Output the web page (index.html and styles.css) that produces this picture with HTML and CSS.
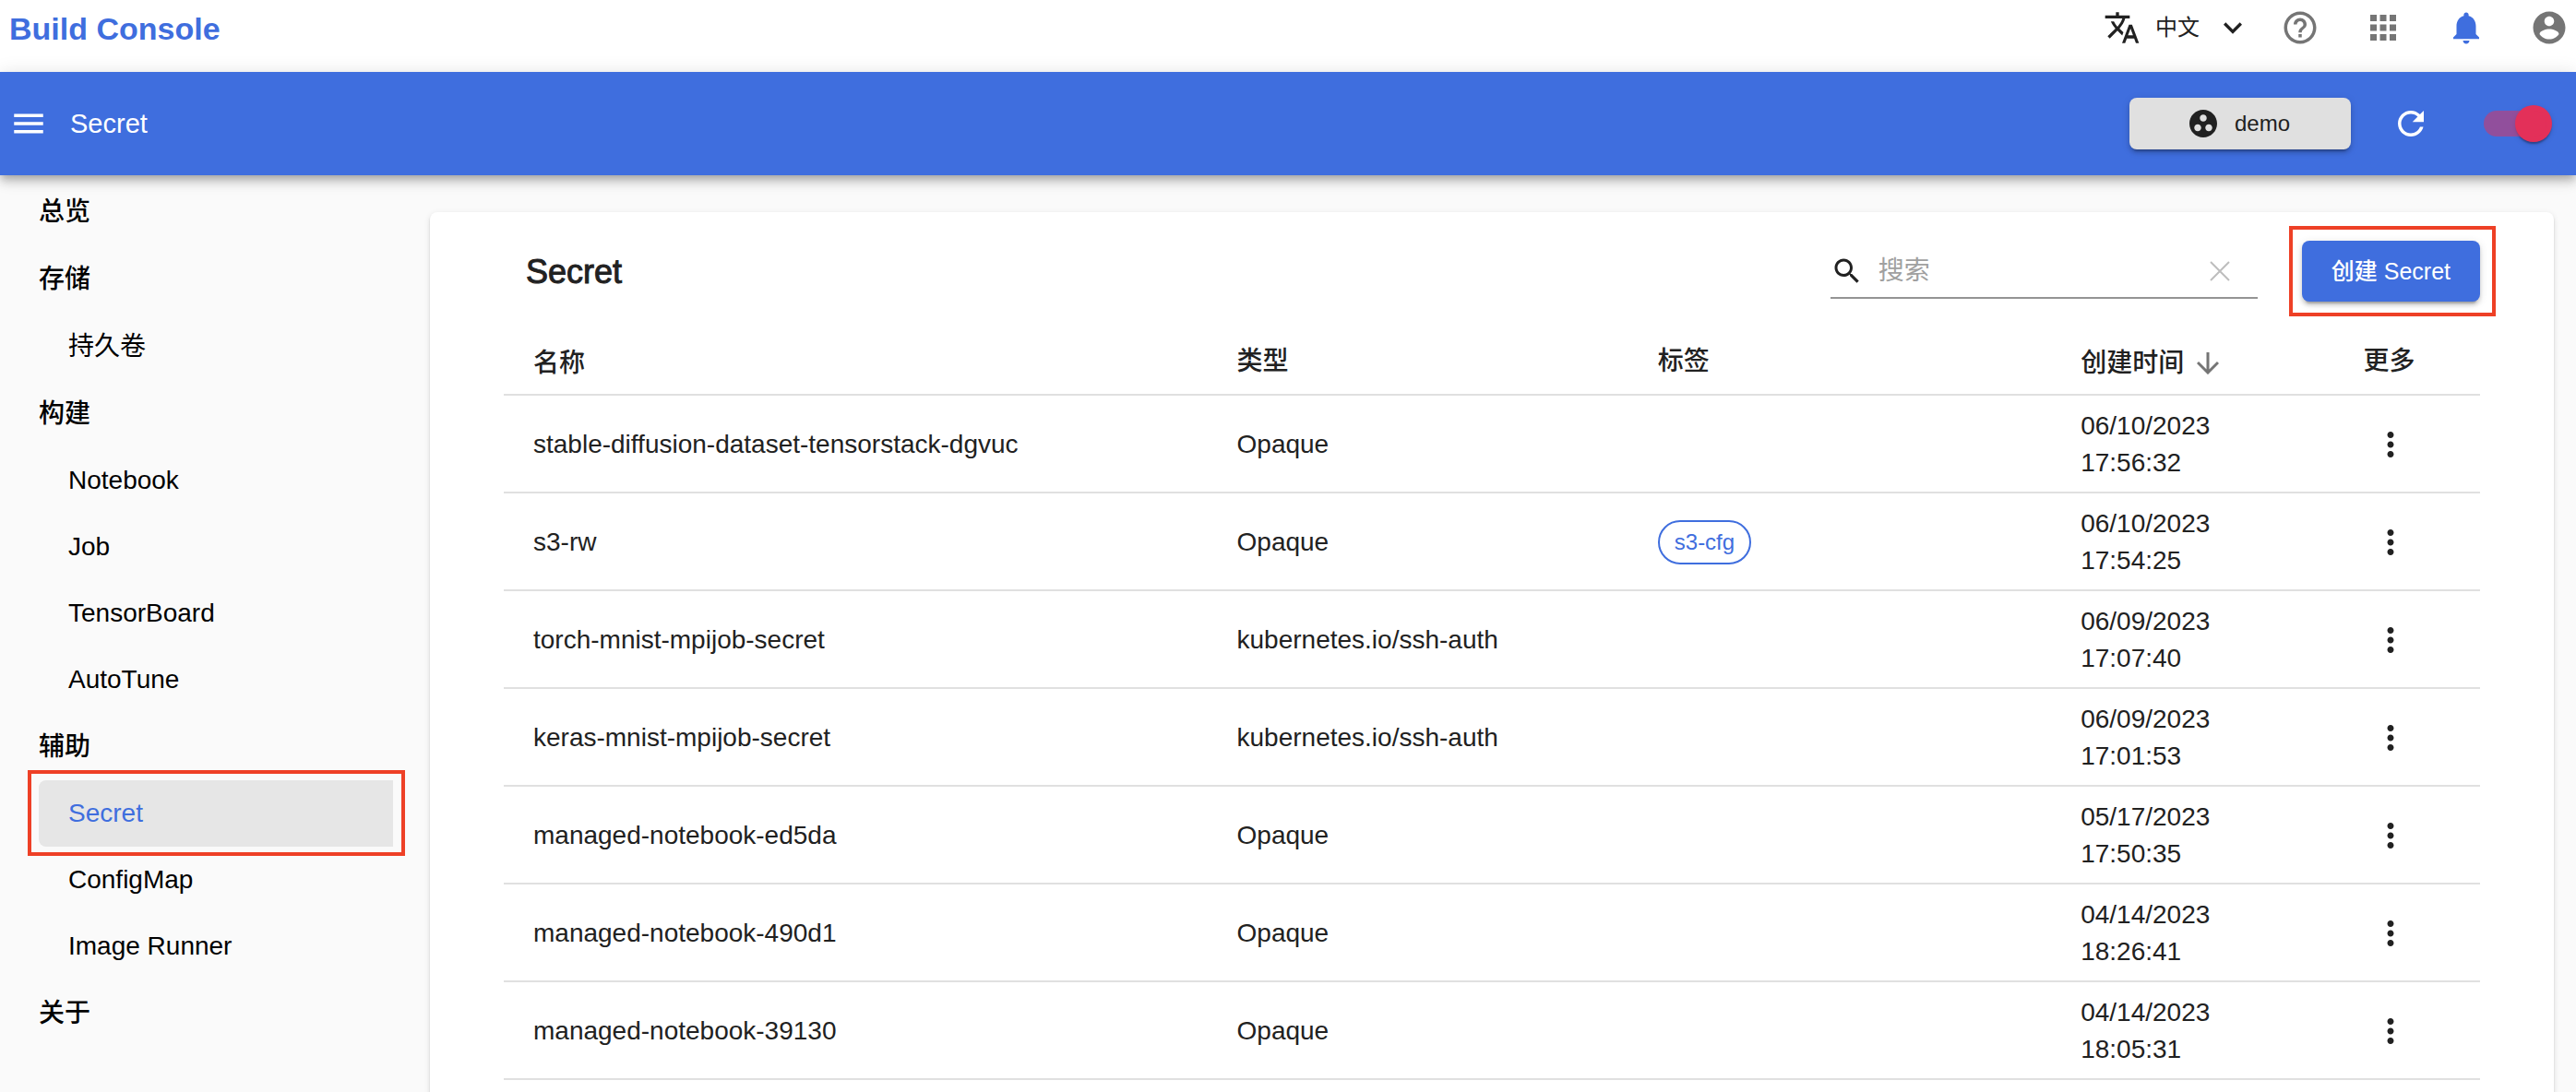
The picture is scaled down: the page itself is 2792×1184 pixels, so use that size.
FILE: index.html
```html
<!DOCTYPE html>
<html lang="zh-CN">
<head>
<meta charset="utf-8">
<meta name="viewport" content="width=device-width, initial-scale=1">
<title>Build Console</title>
<link rel="stylesheet" href="styles.css">
</head>
<body>
<svg class="sprite" aria-hidden="true">
  <symbol id="more" viewBox="0 0 24 24"><path d="M12 8c1.1 0 2-.9 2-2s-.9-2-2-2-2 .9-2 2 .9 2 2 2zm0 2c-1.1 0-2 .9-2 2s.9 2 2 2 2-.9 2-2-.9-2-2-2zm0 6c-1.1 0-2 .9-2 2s.9 2 2 2 2-.9 2-2-.9-2-2-2z"/></symbol>
</svg>
<header class="topbar">
  <a class="brand" href="#">Build Console</a>
  <div class="topbar-actions">
    <button class="language" type="button">
      <svg class="icon icon-lang" viewBox="0 0 24 24"><path d="M12.87 15.07l-2.54-2.51.03-.03c1.74-1.94 2.98-4.17 3.71-6.53H17V4h-7V2H8v2H1v1.99h11.17C11.5 7.92 10.44 9.75 9 11.35 8.07 10.32 7.3 9.19 6.69 8h-2c.73 1.63 1.73 3.17 2.98 4.56l-5.09 5.02L4 19l5-5 3.11 3.11.76-2.04zM18.5 10h-2L12 22h2l1.12-3h4.75L21 22h2l-4.5-12zm-2.62 7l1.62-4.33L19.12 17h-3.24z"/></svg>
      <span>中文</span>
      <svg class="icon icon-lang" viewBox="0 0 24 24"><path d="M16.59 8.59L12 13.17 7.41 8.59 6 10l6 6 6-6z"/></svg>
    </button>
    <div class="shortcuts">
      <button class="icon-button" type="button" aria-label="帮助"><svg class="icon" viewBox="0 0 24 24"><path d="M11 18h2v-2h-2v2zm1-16C6.48 2 2 6.48 2 12s4.48 10 10 10 10-4.48 10-10S17.52 2 12 2zm0 18c-4.41 0-8-3.59-8-8s3.59-8 8-8 8 3.59 8 8-3.59 8-8 8zm0-14c-2.21 0-4 1.79-4 4h2c0-1.1.9-2 2-2s2 .9 2 2c0 2-3 1.75-3 5h2c0-2.25 3-2.5 3-5 0-2.21-1.79-4-4-4z"/></svg></button>
      <button class="icon-button" type="button" aria-label="应用"><svg class="icon" viewBox="0 0 24 24"><path d="M4 8h4V4H4v4zm6 12h4v-4h-4v4zm-6 0h4v-4H4v4zm0-6h4v-4H4v4zm6 0h4v-4h-4v4zm6-10v4h4V4h-4zm-6 4h4V4h-4v4zm6 6h4v-4h-4v4zm0 6h4v-4h-4v4z"/></svg></button>
      <button class="icon-button icon-button-primary" type="button" aria-label="通知"><svg class="icon" viewBox="0 0 24 24"><path d="M12 22c1.1 0 2-.9 2-2h-4c0 1.1.89 2 2 2zm6-6v-5c0-3.07-1.64-5.64-4.5-6.32V4c0-.83-.67-1.5-1.5-1.5s-1.5.67-1.5 1.5v.68C7.63 5.36 6 7.92 6 11v5l-2 2v1h16v-1l-2-2z"/></svg></button>
      <button class="icon-button" type="button" aria-label="账户"><svg class="icon" viewBox="0 0 24 24"><path d="M12 2C6.48 2 2 6.48 2 12s4.48 10 10 10 10-4.48 10-10S17.52 2 12 2zm0 3c1.66 0 3 1.34 3 3s-1.34 3-3 3-3-1.34-3-3 1.34-3 3-3zm0 14.2c-2.5 0-4.71-1.28-6-3.22.03-1.99 4-3.08 6-3.08 1.99 0 5.97 1.09 6 3.08-1.29 1.94-3.5 3.22-6 3.22z"/></svg></button>
    </div>
  </div>
</header>

<div class="appbar">
  <button class="icon-button icon-button-light" type="button" aria-label="菜单"><svg class="icon" viewBox="0 0 24 24"><path d="M3 18h18v-2H3v2zm0-5h18v-2H3v2zm0-7v2h18V6H3z"/></svg></button>
  <h1 class="appbar-title">Secret</h1>
  <div class="appbar-actions">
    <button class="project" type="button">
      <svg class="icon icon-project" viewBox="0 0 24 24"><path d="M12 2C6.48 2 2 6.48 2 12s4.48 10 10 10 10-4.48 10-10S17.52 2 12 2zM8 17.5c-1.38 0-2.5-1.12-2.5-2.5s1.12-2.5 2.5-2.5 2.5 1.12 2.5 2.5-1.12 2.5-2.5 2.5zM9.5 8c0-1.38 1.12-2.5 2.5-2.5s2.5 1.12 2.5 2.5-1.12 2.5-2.5 2.5S9.5 9.38 9.5 8zm6.5 9.5c-1.38 0-2.5-1.12-2.5-2.5s1.12-2.5 2.5-2.5 2.5 1.12 2.5 2.5-1.12 2.5-2.5 2.5z"/></svg>
      <span>demo</span>
    </button>
    <button class="icon-button icon-button-light refresh" type="button" aria-label="刷新"><svg class="icon" viewBox="0 0 24 24"><path d="M17.65 6.35C16.2 4.9 14.21 4 12 4c-4.42 0-7.99 3.58-7.99 8s3.57 8 7.99 8c3.73 0 6.84-2.55 7.73-6h-2.08c-.82 2.33-3.04 4-5.65 4-3.31 0-6-2.69-6-6s2.69-6 6-6c1.66 0 3.14.69 4.22 1.78L13 11h7V4l-2.35 2.35z"/></svg></button>
    <input class="switch" type="checkbox" role="switch" aria-label="自动刷新" checked>
  </div>
</div>

<div class="layout">
  <nav class="sidebar">
    <a class="nav-group" href="#">总览</a>
    <a class="nav-group" href="#">存储</a>
    <a class="nav-item nav-item-cjk" href="#">持久卷</a>
    <a class="nav-group" href="#">构建</a>
    <a class="nav-item" href="#">Notebook</a>
    <a class="nav-item" href="#">Job</a>
    <a class="nav-item" href="#">TensorBoard</a>
    <a class="nav-item" href="#">AutoTune</a>
    <a class="nav-group" href="#">辅助</a>
    <a class="nav-item nav-item-active" href="#" aria-current="page">Secret</a>
    <a class="nav-item" href="#">ConfigMap</a>
    <a class="nav-item" href="#">Image Runner</a>
    <a class="nav-group" href="#">关于</a>
  </nav>

  <main class="card">
    <div class="card-header">
      <h2 class="card-title">Secret</h2>
      <div class="search">
        <svg class="icon icon-search" viewBox="0 0 24 24"><path d="M15.5 14h-.79l-.28-.27C15.41 12.59 16 11.11 16 9.5 16 5.91 13.09 3 9.5 3S3 5.91 3 9.5 5.91 16 9.5 16c1.61 0 3.09-.59 4.23-1.57l.27.28v.79l5 4.99L20.49 19l-4.99-5zm-6 0C7.01 14 5 11.99 5 9.5S7.01 5 9.5 5 14 7.01 14 9.5 11.99 14 9.5 14z"/></svg>
        <input class="search-input" type="text" placeholder="搜索" aria-label="搜索">
        <button class="search-clear" type="button" aria-label="清除"><svg class="icon-clear" viewBox="0 0 22 22"><path d="M1 1l20 20M21 1L1 21"/></svg></button>
      </div>
      <div class="create-wrap"><button class="create" type="button">创建 Secret</button></div>
    </div>

    <table class="table">
      <colgroup><col class="col-name"><col class="col-type"><col class="col-tag"><col class="col-time"><col></colgroup>
      <thead>
        <tr>
          <th scope="col"><button class="sort" type="button">名称</button></th>
          <th scope="col">类型</th>
          <th scope="col">标签</th>
          <th scope="col"><button class="sort" type="button">创建时间 <svg class="icon-sort" viewBox="0 0 24 24"><path d="M12 0v22M1 11l11 11 11-11"/></svg></button></th>
          <th scope="col">更多</th>
        </tr>
      </thead>
      <tbody>
        <tr><td>stable-diffusion-dataset-tensorstack-dgvuc</td><td>Opaque</td><td></td><td>06/10/2023<br>17:56:32</td><td><button class="more" type="button" aria-label="更多"><svg class="icon"><use href="#more"/></svg></button></td></tr>
        <tr><td>s3-rw</td><td>Opaque</td><td><span class="chip">s3-cfg</span></td><td>06/10/2023<br>17:54:25</td><td><button class="more" type="button" aria-label="更多"><svg class="icon"><use href="#more"/></svg></button></td></tr>
        <tr><td>torch-mnist-mpijob-secret</td><td>kubernetes.io/ssh-auth</td><td></td><td>06/09/2023<br>17:07:40</td><td><button class="more" type="button" aria-label="更多"><svg class="icon"><use href="#more"/></svg></button></td></tr>
        <tr><td>keras-mnist-mpijob-secret</td><td>kubernetes.io/ssh-auth</td><td></td><td>06/09/2023<br>17:01:53</td><td><button class="more" type="button" aria-label="更多"><svg class="icon"><use href="#more"/></svg></button></td></tr>
        <tr><td>managed-notebook-ed5da</td><td>Opaque</td><td></td><td>05/17/2023<br>17:50:35</td><td><button class="more" type="button" aria-label="更多"><svg class="icon"><use href="#more"/></svg></button></td></tr>
        <tr><td>managed-notebook-490d1</td><td>Opaque</td><td></td><td>04/14/2023<br>18:26:41</td><td><button class="more" type="button" aria-label="更多"><svg class="icon"><use href="#more"/></svg></button></td></tr>
        <tr><td>managed-notebook-39130</td><td>Opaque</td><td></td><td>04/14/2023<br>18:05:31</td><td><button class="more" type="button" aria-label="更多"><svg class="icon"><use href="#more"/></svg></button></td></tr>
      </tbody>
    </table>
  </main>
</div>
</body>
</html>
```
FILE: styles.css
```css
:root {
  --primary: #3f6ede;
  --accent: #e33059;
  --mark: #ee4026;
  --text: #212121;
  --line: #e0e0e0;
}

* { box-sizing: border-box; }

body {
  margin: 0;
  height: 100vh;
  display: flex;
  flex-direction: column;
  overflow: hidden;
  background: #fafafa;
  color: var(--text);
  font: 28px/40px "Liberation Sans", "Noto Sans CJK SC", sans-serif;
}

button, input { font: inherit; color: inherit; }
button { border: 0; padding: 0; background: none; cursor: pointer; }
a { color: inherit; text-decoration: none; }
h1, h2 { margin: 0; font-weight: 400; }

.sprite { display: none; }
.icon { display: block; width: 42px; height: 42px; fill: currentColor; }

/* Top bar */
.topbar {
  flex: none;
  display: flex;
  align-items: center;
  justify-content: space-between;
  height: 78px;
  padding: 0 8px 18px;
  background: #fff;
}
.brand { padding: 2px 0 0 2px; color: var(--primary); font-size: 34px; font-weight: 700; }
.topbar-actions { display: flex; align-items: center; gap: 32px; }
.language { display: flex; align-items: center; gap: 16px; font-size: 24px; }
.icon-lang { width: 40px; height: 40px; }
.shortcuts { display: flex; gap: 48px; }
.icon-button { color: #757575; }
.icon-button-primary { color: var(--primary); }
.icon-button-light { color: #fff; }

/* App bar */
.appbar {
  flex: none;
  position: relative;
  z-index: 1;
  display: flex;
  align-items: center;
  height: 112px;
  padding: 0 8px 0 10px;
  background: var(--primary);
  color: #fff;
  box-shadow: 0 4px 8px -2px rgba(0, 0, 0, .2), 0 8px 10px rgba(0, 0, 0, .14), 0 2px 20px rgba(0, 0, 0, .12);
}
.appbar-title { margin-left: 24px; font-size: 29px; }
.appbar-actions { display: flex; align-items: center; margin-left: auto; }
.project {
  display: flex;
  align-items: center;
  justify-content: center;
  gap: 16px;
  width: 240px;
  height: 56px;
  padding-right: 4px;
  border-radius: 8px;
  background: var(--line);
  color: var(--text);
  font-size: 24px;
  box-shadow: 0 6px 2px -4px rgba(0, 0, 0, .2), 0 4px 4px rgba(0, 0, 0, .14), 0 2px 10px rgba(0, 0, 0, .12);
}
.icon-project { width: 36px; height: 36px; }
.refresh { margin: 0 34px 0 44px; }
.switch {
  appearance: none;
  display: grid;
  align-items: center;
  width: 116px;
  height: 76px;
  margin: 0;
  padding: 0 18px 0 24px;
}
.switch::before, .switch::after { content: ""; grid-area: 1 / 1; background: var(--accent); }
.switch::before { width: 68px; height: 28px; border-radius: 14px; opacity: .5; }
.switch::after {
  justify-self: end;
  width: 40px;
  height: 40px;
  border-radius: 50%;
  box-shadow: 0 4px 2px -2px rgba(0, 0, 0, .2), 0 2px 2px rgba(0, 0, 0, .14), 0 2px 6px rgba(0, 0, 0, .12);
}

/* Layout */
.layout { flex: 1; min-height: 0; display: flex; align-items: flex-start; gap: 40px; padding-right: 24px; }

.sidebar { flex: none; width: 426px; padding: 3px 0 0 42px; color: #000; }
.nav-group, .nav-item { display: flex; align-items: center; height: 72px; }
.nav-group, .nav-item-cjk { height: 73px; }
.nav-group { font-weight: 500; }
.nav-item { padding-left: 32px; }
.nav-item-active {
  position: relative;
  border-radius: 8px 0 0 8px;
  background: #e6e6e6;
  color: var(--primary);
}
.nav-item-active::after {
  content: "";
  position: absolute;
  inset: -11px -13px -10px -12px;
  border: 4px solid var(--mark);
}

/* Card */
.card {
  flex: 1;
  min-width: 0;
  margin-top: 40px;
  padding: 31px 80px 64px;
  border-radius: 8px;
  background: #fff;
  box-shadow: 0 4px 2px -2px rgba(0, 0, 0, .2), 0 2px 2px rgba(0, 0, 0, .14), 0 2px 6px rgba(0, 0, 0, .12);
}
.card-header { display: flex; align-items: center; height: 66px; padding-left: 24px; }
.card-title { padding-top: 2px; font-size: 36px; -webkit-text-stroke: 1px; }
.search {
  display: flex;
  align-items: center;
  width: 463px;
  height: 60px;
  margin-left: auto;
  padding: 2px 30px 0 0;
  border-bottom: 2px solid #949494;
}
.icon-search { flex: none; width: 36px; height: 36px; }
.search-input { flex: 1; min-width: 0; padding: 0 0 0 16px; border: 0; outline: 0; background: none; }
.search-input::placeholder { color: #a0a0a0; opacity: 1; }
.icon-clear { display: block; width: 22px; height: 22px; fill: none; stroke: #bdbdbd; stroke-width: 2; }
.create-wrap { position: relative; margin-left: 48px; }
.create-wrap::after {
  content: "";
  position: absolute;
  inset: -16px -17px -16px -14px;
  border: 4px solid var(--mark);
  pointer-events: none;
}
.create {
  display: block;
  height: 66px;
  padding: 0 32px;
  border-radius: 8px;
  background: var(--primary);
  color: #fff;
  font-size: 25px;
  font-weight: 500;
  box-shadow: 0 6px 2px -4px rgba(0, 0, 0, .2), 0 4px 4px rgba(0, 0, 0, .14), 0 2px 10px rgba(0, 0, 0, .12);
}

/* Table */
.table { width: 100%; margin-top: 28px; border-collapse: separate; border-spacing: 0; table-layout: fixed; }
.col-name { width: 35.6%; }
.col-type { width: 21.3%; }
.col-tag { width: 21.4%; }
.col-time { width: 14.3%; }
.table th, .table td { border-bottom: 2px solid var(--line); text-align: left; vertical-align: middle; }
.table th { height: 74px; padding: 14px 32px 12px; font-weight: 500; }
.table td { height: 106px; padding: 13px 32px 11px; white-space: nowrap; }
.sort { display: flex; align-items: center; gap: 14px; margin-top: 4px; font-weight: 500; }
.icon-sort { width: 24px; height: 24px; fill: none; stroke: #757575; stroke-width: 3; }
.more { display: block; padding: 0 9px; }
.chip {
  display: block;
  width: fit-content;
  height: 48px;
  padding: 0 16px;
  border: 2px solid var(--primary);
  border-radius: 24px;
  color: var(--primary);
  font-size: 24px;
  line-height: 44px;
}
```
